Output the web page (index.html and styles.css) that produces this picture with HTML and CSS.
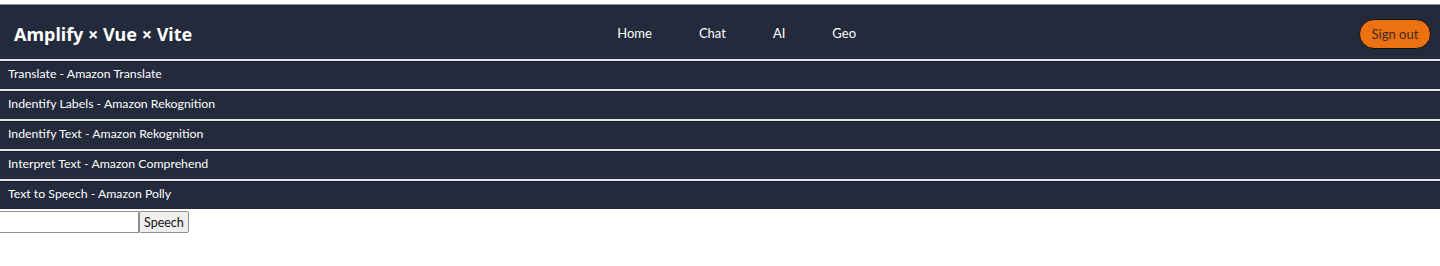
FILE: index.html
```html
<!DOCTYPE html>
<html lang="en">

<head>
    <meta charset="UTF-8">
    <meta name="viewport" content="width=device-width, initial-scale=1.0">
    <title>Amplify × Vue × Vite</title>
    <link rel="stylesheet" href="styles.css">
</head>

<body>
    <header class="topbar">
        <h1 class="brand">Amplify × Vue × Vite</h1>
        <nav class="nav">
            <a href="#">Home</a>
            <a href="#">Chat</a>
            <a href="#">AI</a>
            <a href="#">Geo</a>
        </nav>
        <button class="signout">Sign out</button>
    </header>

    <div class="menu">
        <div class="menu-item">Translate - Amazon Translate</div>
        <div class="menu-item">Indentify Labels - Amazon Rekognition</div>
        <div class="menu-item">Indentify Text - Amazon Rekognition</div>
        <div class="menu-item">Interpret Text - Amazon Comprehend</div>
        <div class="menu-item">Text to Speech - Amazon Polly</div>
    </div>

    <div class="speech">
        <input type="text" class="speech-input">
        <button class="speech-button">Speech</button>
    </div>
</body>

</html>
```

FILE: styles.css
```css
html,
body {
    margin: 0;
    background: #fff;
}

body {
    padding-top: 4px;
    font-family: Lato, "Noto Sans", sans-serif;
}

.topbar {
    display: flex;
    align-items: center;
    height: 55px;
    padding: 0 9px 0 14px;
    background-color: #232a3b;
    border-top: 1px solid #8d929b;
    box-sizing: border-box;
}

.brand {
    margin: 4px 0 0 0;
    font-family: "Noto Sans", sans-serif;
    font-size: 18px;
    font-weight: 700;
    color: #fff;
    white-space: nowrap;
}

.nav {
    display: flex;
    gap: 47px;
    margin: 2px auto 0;
    padding-right: 78px;
}

.nav a {
    color: #fff;
    text-decoration: none;
    font-size: 13px;
}

.signout {
    width: 72px;
    height: 30px;
    padding: 0;
    margin-top: 3px;
    background-color: #ec7211;
    color: #3d2a1b;
    border: 1px solid #111;
    border-radius: 15px;
    font-family: Lato, sans-serif;
    font-size: 13px;
}

.menu-item {
    height: 28px;
    line-height: 26px;
    padding-left: 8px;
    background-color: #232a3b;
    color: #fff;
    font-size: 12.3px;
    border-top: 2px solid #e4e5e8;
    box-shadow: inset 0 1px 0 #151a26;
}

.speech {
    display: flex;
    margin-top: 2px;
}

.speech-input {
    width: 139px;
    height: 22px;
    margin: 0;
    padding: 0 2px;
    border: 1px solid #8f8f8f;
    border-left: none;
    box-sizing: border-box;
}

.speech-button {
    height: 22px;
    margin: 0;
    padding: 0 4px;
    border: 1px solid #8f8f8f;
    border-radius: 2px;
    background-color: #efefef;
    font-family: Lato, sans-serif;
    font-size: 12.5px;
    color: #111;
}
```
